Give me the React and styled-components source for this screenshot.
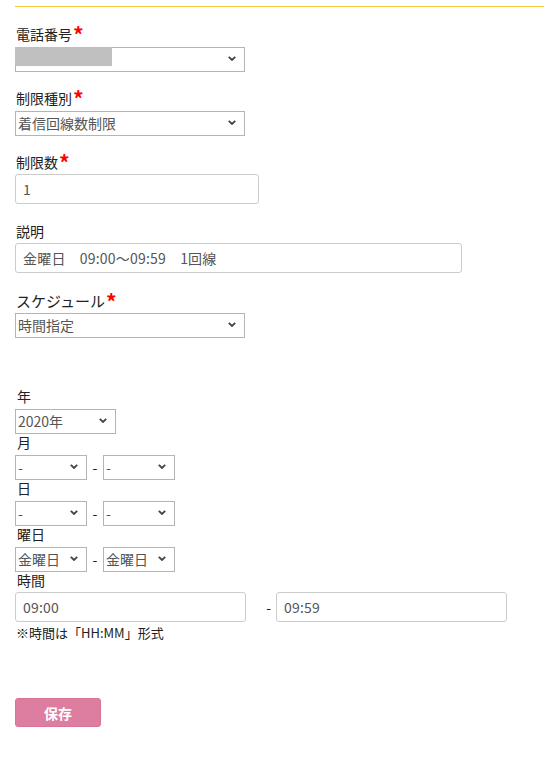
import React from "react";
import styled, { createGlobalStyle } from "styled-components";

const GlobalStyle = createGlobalStyle`
  body {
    margin: 0;
    background: #ffffff;
    font-family: "Noto Sans CJK JP", "Liberation Sans", sans-serif;
    color: #333;
  }
`;

const Page = styled.div`
  padding: 6px 0 40px 15px;
`;

const TopRule = styled.div`
  height: 1px;
  background: #f9c53a;
  margin-bottom: 18px;
`;

const Group = styled.div`
  margin-bottom: 18px;
`;

const Label = styled.div`
  height: 21px;
  line-height: 19px;
  font-size: ${(p) => (p.$big ? "15px" : "14px")};
  color: #222;
  padding-left: ${(p) => (p.$indent ? "2px" : "1px")};
  white-space: nowrap;
`;

const Req = styled.span`
  color: #f00;
  font-size: 21px;
  font-weight: bold;
  line-height: 0;
  margin-left: 1px;
  position: relative;
  top: 3px;
`;

const SelectWrap = styled.div`
  position: relative;
  width: ${(p) => p.$w}px;
  height: 25px;
`;

const NativeSelect = styled.select`
  appearance: none;
  -webkit-appearance: none;
  box-sizing: border-box;
  width: 100%;
  height: 100%;
  margin: 0;
  border: 1px solid #b4b4b4;
  border-radius: 0;
  background: #fff;
  padding: 0 18px 0 2px;
  font-family: "Noto Sans CJK JP", "Liberation Sans", sans-serif;
  font-size: 14px;
  color: #555;
  outline: none;
`;

const Chevron = styled.svg`
  position: absolute;
  right: 9px;
  top: 10px;
  width: 8px;
  height: 5px;
  pointer-events: none;
`;

const Redacted = styled.div`
  position: absolute;
  left: 0;
  top: 1px;
  width: 97px;
  height: 19px;
  background: #c0c0c0;
`;

const TextInput = styled.input`
  box-sizing: border-box;
  display: block;
  width: ${(p) => p.$w}px;
  height: 30px;
  margin: 0;
  border: 1px solid #ccc;
  border-radius: 3px;
  padding: 0 7px;
  font-family: "Noto Sans CJK JP", "Liberation Sans", sans-serif;
  font-size: 14px;
  letter-spacing: 0.2px;
  color: #555;
  background: #fff;
  outline: none;
`;

const Spacer = styled.div`
  height: 32px;
`;

const Range = styled.div`
  display: flex;
  align-items: center;
`;

const Dash = styled.span`
  box-sizing: border-box;
  width: ${(p) => p.$w}px;
  padding-right: ${(p) => p.$pr || 0}px;
  text-align: ${(p) => (p.$pr ? "right" : "center")};
  font-size: 14px;
  color: #222;
`;

const Note = styled.div`
  height: 21px;
  line-height: 21px;
  font-size: 13px;
  color: #222;
  padding-left: 1px;
`;

const SaveButton = styled.button`
  margin-top: 55px;
  width: 86px;
  height: 29px;
  border: 1px solid #d7749a;
  border-radius: 3px;
  background: #dd7ea0;
  color: #fff;
  font-family: "Noto Sans CJK JP", sans-serif;
  font-weight: bold;
  font-size: 14px;
  cursor: pointer;
`;

const Select = ({ width, value, options, redacted }) => (
  <SelectWrap $w={width}>
    <NativeSelect defaultValue={value}>
      {options.map((o) => (
        <option key={o}>{o}</option>
      ))}
    </NativeSelect>
    {redacted && <Redacted />}
    <Chevron viewBox="0 0 8 5">
      <path d="M0.8 0.8 L4 4 L7.2 0.8" fill="none" stroke="#444" strokeWidth="1.8" />
    </Chevron>
  </SelectWrap>
);

const App = () => {
  return (
    <Page>
      <GlobalStyle />
      <TopRule />
      <Group>
        <Label>
          電話番号<Req>*</Req>
        </Label>
        <Select width={230} value="" options={[""]} redacted />
      </Group>
      <Group>
        <Label>
          制限種別<Req>*</Req>
        </Label>
        <Select width={230} value="着信回線数制限" options={["着信回線数制限"]} />
      </Group>
      <Group>
        <Label>
          制限数<Req>*</Req>
        </Label>
        <TextInput $w={244} defaultValue="1" />
      </Group>
      <Group>
        <Label>説明</Label>
        <TextInput $w={447} defaultValue="金曜日　09:00〜09:59　1回線" />
      </Group>
      <Group>
        <Label $big>
          スケジュール<Req>*</Req>
        </Label>
        <Select width={230} value="時間指定" options={["時間指定"]} />
      </Group>
      <Spacer />
      <Label $indent>年</Label>
      <Select width={101} value="2020年" options={["2020年"]} />
      <Label $indent>月</Label>
      <Range>
        <Select width={72} value="-" options={["-"]} />
        <Dash $w={16}>-</Dash>
        <Select width={72} value="-" options={["-"]} />
      </Range>
      <Label $indent>日</Label>
      <Range>
        <Select width={72} value="-" options={["-"]} />
        <Dash $w={16}>-</Dash>
        <Select width={72} value="-" options={["-"]} />
      </Range>
      <Label $indent>曜日</Label>
      <Range>
        <Select width={72} value="金曜日" options={["金曜日"]} />
        <Dash $w={16}>-</Dash>
        <Select width={72} value="金曜日" options={["金曜日"]} />
      </Range>
      <Label $indent>時間</Label>
      <Range>
        <TextInput $w={231} defaultValue="09:00" />
        <Dash $w={30} $pr={5}>-</Dash>
        <TextInput $w={231} defaultValue="09:59" />
      </Range>
      <Note>※時間は「HH:MM」形式</Note>
      <SaveButton>保存</SaveButton>
    </Page>
  );
};

export default App;
